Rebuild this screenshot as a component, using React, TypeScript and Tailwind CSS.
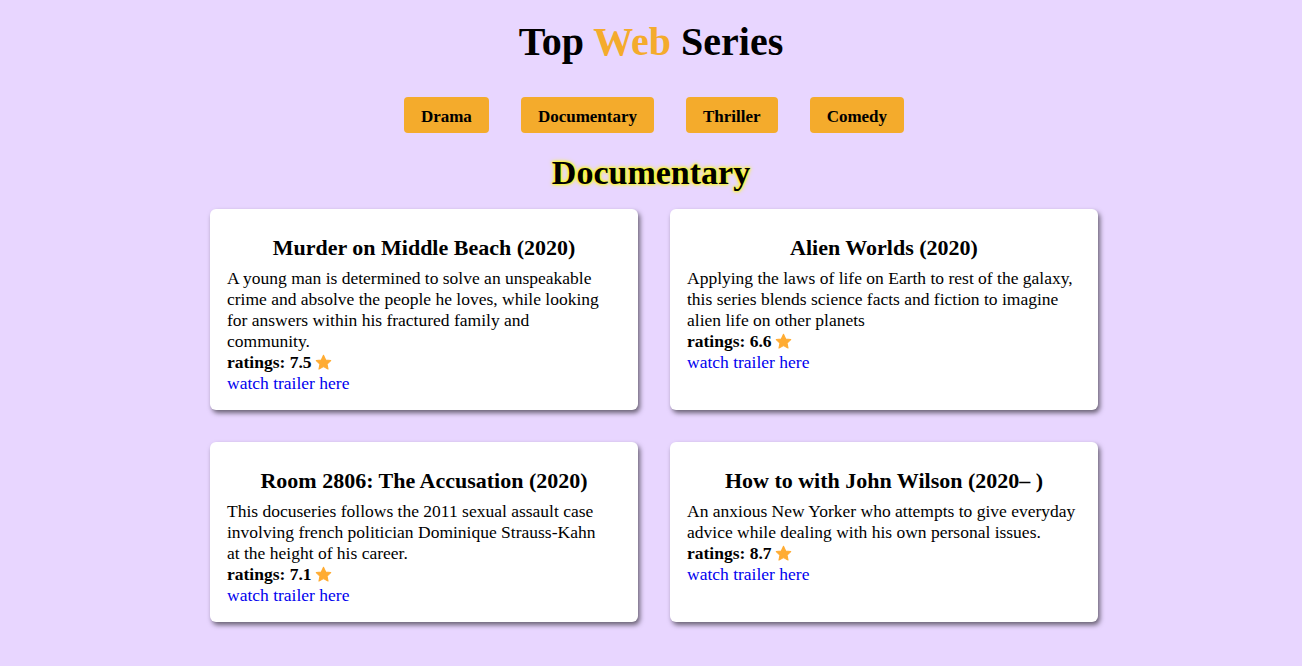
const series = [
  {
    title: "Murder on Middle Beach (2020)",
    lines: [
      "A young man is determined to solve an unspeakable",
      "crime and absolve the people he loves, while looking",
      "for answers within his fractured family and",
      "community.",
    ],
    rating: "7.5",
  },
  {
    title: "Alien Worlds (2020)",
    lines: [
      "Applying the laws of life on Earth to rest of the galaxy,",
      "this series blends science facts and fiction to imagine",
      "alien life on other planets",
    ],
    rating: "6.6",
  },
  {
    title: "Room 2806: The Accusation (2020)",
    lines: [
      "This docuseries follows the 2011 sexual assault case",
      "involving french politician Dominique Strauss-Kahn",
      "at the height of his career.",
    ],
    rating: "7.1",
  },
  {
    title: "How to with John Wilson (2020– )",
    lines: [
      "An anxious New Yorker who attempts to give everyday",
      "advice while dealing with his own personal issues.",
    ],
    rating: "8.7",
  },
];

const genres = ["Drama", "Documentary", "Thriller", "Comedy"];

function Star() {
  return (
    <svg viewBox="0 0 24 24" className="inline-block w-[17px] h-[17px] ml-[3px] -mt-[3px] align-middle">
      <path
        d="M12 1.8l3.1 6.6 7.1.9-5.2 4.9 1.4 7.1L12 17.8l-6.4 3.5 1.4-7.1-5.2-4.9 7.1-.9z"
        fill="#ffac33"
        stroke="#ffac33"
        strokeWidth="1.5"
        strokeLinejoin="round"
      />
    </svg>
  );
}

export default function App() {
  return (
    <div className="min-h-screen w-full bg-[#e8d6ff] font-['Liberation_Serif',serif] text-black flex flex-col items-center">
      <h1 className="mt-[15px] text-[40px] leading-[54px] font-bold">
        Top <span className="text-[#f4ab2c]">Web</span> Series
      </h1>

      <div className="mt-[28px] pl-[6px] flex gap-[32px]">
        {genres.map((g) => (
          <button
            key={g}
            className="h-9 px-[17px] pt-[3px] rounded-[4px] bg-[#f4ab2c] text-[17px] font-bold"
          >
            {g}
          </button>
        ))}
      </div>

      <h2 className="mt-[18px] text-[34px] leading-[43px] font-bold [text-shadow:0_0_2px_#ffff00,0_0_3px_#ffff00,0_0_5px_#ffff00]">
        Documentary
      </h2>

      {/* cards */}
      <div className="mt-[15px] pl-[6px] grid grid-cols-[428px_428px] gap-[32px]">
        {series.map((s) => (
          <div
            key={s.title}
            className="bg-white rounded-[6px] px-[17px] pt-[25px] pb-[16px] shadow-[2px_3px_5px_rgba(0,0,0,0.55)]"
          >
            <h3 className="text-center text-[22px] leading-[27px] font-bold">{s.title}</h3>
            <p className="mt-[7px] text-[17.5px] leading-[21px]">
              {s.lines.map((l) => (
                <span key={l} className="block whitespace-nowrap">
                  {l}
                </span>
              ))}
            </p>
            <p className="text-[17.5px] leading-[21px]">
              <b>ratings: {s.rating}</b>
              <Star />
            </p>
            <a href="#" className="block text-[17.5px] leading-[21px] text-[#0000ee]">
              watch trailer here
            </a>
          </div>
        ))}
      </div>
    </div>
  );
}
